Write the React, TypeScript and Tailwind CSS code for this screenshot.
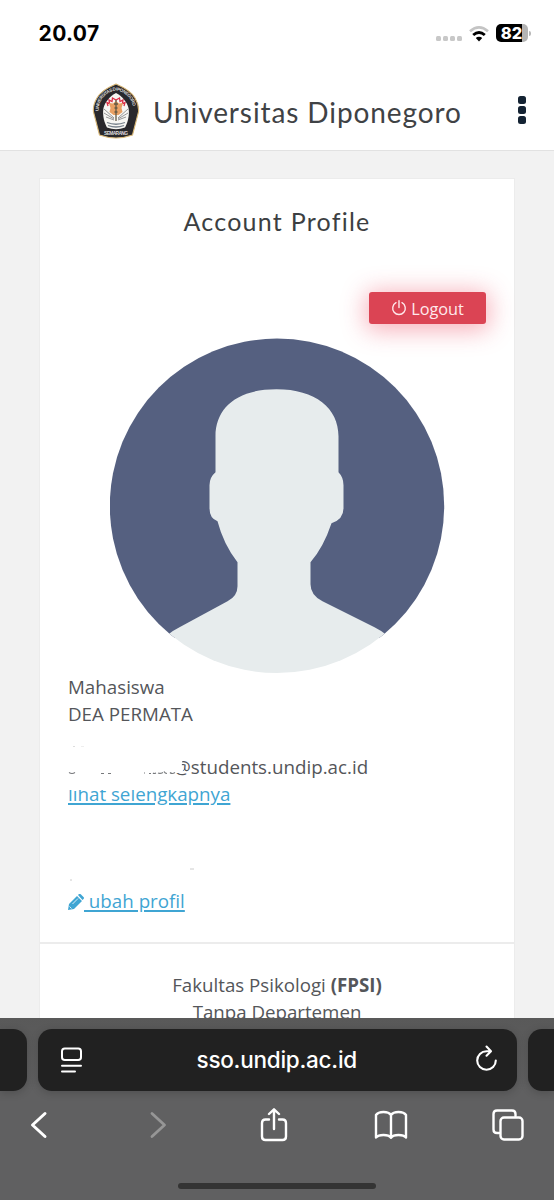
import React from "react";

function StatusBar() {
  return (
    <div className="flex h-[68px] items-start justify-between pl-[38.500px] pr-[23px] font-['Inter',sans-serif]">
      <span className="mt-[20px] text-[21px] leading-7 font-bold tracking-[0.4px] text-black">20.07</span>
      <div className="mt-[24px] flex items-center">
        <div className="mt-[10px] mr-[7px] flex gap-[2px]">
          {[0, 1, 2, 3].map((i) => (
            <span key={i} className="size-[5px] rounded-[1.5px] bg-[#c8c8c8]" />
          ))}
        </div>
        <svg width="20" height="17" viewBox="0 0 20 17" className="mr-[7px]" fill="none">
          <path d="M1 6.200Q10-1.500 19 6.200" stroke="#c4c4c4" strokeWidth="2.700" />
          <path d="M4.200 10Q10 5 15.800 10" stroke="#000" strokeWidth="2.900" />
          <path d="M10 16.400l-3.200-3.400a4.600 4.600 0 0 1 6.400 0z" fill="#000" />
        </svg>
        <div className="flex h-[18px] w-8 items-center justify-center rounded-[5px] bg-[linear-gradient(90deg,#000_82%,#b4b4b4_82%)] pr-px text-[16.5px] leading-none font-extrabold text-white">82</div>
        <span className="ml-px h-[5px] w-[2px] rounded-r-full bg-[#b8b8b8]" />
      </div>
    </div>
  );
}

function Crest() {
  return (
    <svg width="48" height="56" viewBox="0 0 48 56" className="shrink-0">
      <path d="M24 1C17 4 9 8 5 15 2 20 1 25 1.5 29L7.5 52Q24 58 40.500 52L46.500 29C47 24 46 20 43 15 39 8 31 4 24 1Z" fill="#29282c" stroke="#d9b878" strokeWidth="1.1" />
      <path d="M24 10C18 13 13 19 11.500 25 10 33 13 41 15 44.500Q24 48 33 44.500C35 41 38 33 36.500 25 35 19 30 13 24 10Z" fill="#f7f6f3" />
      <path id="crest-arc" d="M7 29C5.500 17 14.500 9 24 7.300 33.500 9 42.500 17 41 29" fill="none" />
      <text className="font-['Liberation_Sans',sans-serif] text-[4.600px] font-bold" fill="#d9d8d8">
        <textPath href="#crest-arc" textLength="54" startOffset="1">UNIVERSITAS DIPONEGORO</textPath>
      </text>
      <path d="M16 23l-1-3.500 2.500 1-.5-3.500 3 1.500.5-3.500 3.500 2 3.500-2 .5 3.500 3-1.500-.5 3.500 2.500-1-1 3.500" fill="none" stroke="#db3048" strokeWidth="1.300" />
      <path d="M24 18l3 2.500 4-.5-1.500 5 1 4-4 3h-5l-4-3 1-4-1.500-5 4 .5z" fill="#e8a063" />
      <path d="M22 35l-10-9M22 36l-10-6M22 37l-8-3M26 35l10-9M26 36l10-6M26 37l8-3" stroke="#6b6b6d" strokeWidth=".7" />
      <path d="M24 17v21M22 21h4M22.500 25h3M22.500 29h3" stroke="#625844" strokeWidth="1.300" />
      <path d="M15 39.500q9 3.500 18 0M16 42.500q8 3 16 0" stroke="#77808b" strokeWidth="1.300" fill="none" />
      <text x="24" y="51.600" textAnchor="middle" textLength="24" className="font-['Liberation_Sans',sans-serif] text-[4.800px] font-bold" fill="#dedddd">SEMARANG</text>
    </svg>
  );
}

function Header() {
  return (
    <header className="flex h-[83px] items-start border-b border-[#e2e2e2] pt-[15px] pr-[28px] pl-[92px]">
      <Crest />
      <h1 className="mt-[8px] ml-[13px] text-[28px] leading-[42px] tracking-[0.900px] whitespace-nowrap text-[#3f4245] font-['Lato',sans-serif]">Universitas Diponegoro</h1>
      <div className="mt-[13px] ml-auto flex flex-col gap-[2px]">
        {[0, 1, 2].map((i) => (
          <span key={i} className="size-[8px] rounded-[2.500px] bg-[#142333]" />
        ))}
      </div>
    </header>
  );
}

function Avatar() {
  return (
    <svg viewBox="0 0 335 335" className="mt-[14px] mb-px ml-[70px] block size-[335px]">
      <defs>
        <clipPath id="disc"><circle cx="167" cy="167.800" r="167.200" /></clipPath>
      </defs>
      <g clipPath="url(#disc)">
        <path d="M0 0H335V300H0Z" fill="#556080" />
        <path d="M167 51C127 51 106 70 106 98V134Q100 139 100 147V170Q100 180 108 183Q114 206 128 224V248Q128 258 118 263L70 289Q64 292 59 296V335H276V296Q271 292 265 289L213 263Q201 257 201 246V224Q214 209 222 185Q234 181 234 170V147Q234 139 229 134V98C229 70 206 51 167 51Z" transform="translate(-.5 .2)" fill="#e7eced" />
      </g>
    </svg>
  );
}

function Profile() {
  return (
    <div className="pl-[28px] text-[18.750px] leading-[26.700px] text-[#54565a]">
      <p>Mahasiswa</p>
      <p>DEA PERMATA</p>
      <div className="flex h-[26.700px] items-start pt-[19px] pl-[5px]">
        <span className="h-px w-[2px] bg-[#ddd]" />
        <span className="ml-[6px] h-px w-[3px] bg-[#eee]" />
      </div>
      <div className="relative">
        <p className="pl-[106px]">@students.undip.ac.id</p>
        <svg width="122" height="27" viewBox="0 0 122 27" className="absolute top-0 left-0">
          <path d="M101 0H119Q113 6 114 12L116 15Q115 18 112 19H101Z" fill="#fff" />
          <path d="M1 18.500q3 2 6 0M33 19.500h3M40 19.500h3M76 19h1M81 19.500h2M85 19q1 1 3 0M90 19q2 1 5-.5M96 17.500q1 2 3 2M102 18.500q2 2 5 0" stroke="#77797c" strokeWidth="1.200" fill="none" />
        </svg>
      </div>
      <div className="relative">
        <a className="text-[#3fa5d3] underline decoration-[1.500px] underline-offset-[2px]">lihat selengkapnya</a>
        <span className="absolute top-0 left-0 h-[9px] w-[120px] bg-white" />
      </div>
      <div className="flex h-[80.300px] items-start pt-[60px]">
        <svg width="140" height="16" viewBox="0 0 140 16"><path d="M122 1h4M2 12h2" stroke="#ccc" /></svg>
      </div>
      <a className="flex items-center text-[#3fa5d3]">
        <svg width="16" height="16" viewBox="0 0 16 16" className="mt-[2px]">
          <path d="M0 16l1-6 8-8 5 5-8 8zM10 1l1-1q1-.5 2 .5L15.500 3q1 1 0 2L14.500 6z" fill="currentColor" />
          <path d="M1.500 12.500l2 2M4.500 10l5.500-5.500" stroke="#fff" strokeWidth=".8" />
        </svg>
        <span className="whitespace-pre underline decoration-[1.500px] underline-offset-[2px]"> ubah profil</span>
      </a>
    </div>
  );
}

function AccountCard() {
  return (
    <main className="mx-[39px] mt-[27px] h-[860px] border border-[#ececec] bg-white">
      <h2 className="pt-[26px] text-center text-[25px] leading-[32px] tracking-[1.250px] text-[#3c3f42] font-['Lato',sans-serif]">Account Profile</h2>
      <div className="mt-[55px] flex justify-end pr-[28px]">
        <button className="flex h-[32px] w-[117px] items-center justify-center rounded-[3px] bg-[#db4454] pt-[2px] text-[16.300px] text-[#ffe9ec] shadow-[0_3px_24px_3px_rgba(235,55,80,0.400)]">
          <svg width="16" height="16" viewBox="0 0 16 16" fill="none" stroke="currentColor" strokeWidth="1.400" strokeLinecap="round" className="mr-[4px] mb-[3px]">
            <path d="M8 .8v6.700M5 2.700a6.300 6.300 0 1 0 6 0" />
          </svg>
          Logout
        </button>
      </div>
      <Avatar />
      <Profile />
      <div className="mt-[27.500px] border-t-2 border-[#ececec] pt-[28px] text-center text-[18.700px] leading-[26.700px] text-[#54565a]">
        <p>Fakultas Psikologi <b>(FPSI)</b></p>
        <p>Tanpa Departemen</p>
      </div>
    </main>
  );
}

const iconProps = { fill: "none", stroke: "currentColor", strokeWidth: 2.4, strokeLinecap: "round", strokeLinejoin: "round" } as const;

function BrowserBar() {
  return (
    <footer className="h-[182px] bg-[linear-gradient(#595959,#606061_40%,#606061)] pt-[10.500px] text-white">
      <div className="flex h-[62.500px] gap-[11px]">
        <div className="w-[26.500px] rounded-r-[14px] bg-[#212121] shadow-[0_2px_8px_rgba(0,0,0,0.18)]" />
        <div className="flex flex-1 items-center justify-between rounded-[14px] bg-[#212121] pr-[19px] pl-[23.500px] shadow-[0_2px_8px_rgba(0,0,0,0.18)]">
          <svg width="21" height="26" viewBox="0 0 21 26" {...iconProps} strokeWidth={2}>
            <rect x="1" y="1.500" width="19" height="11.500" rx="2.800" />
            <path d="M1 18.800h19M1 24.500h13" />
          </svg>
          <span className="mt-px mr-[5px] text-[22.500px] font-medium tracking-[-0.250px] font-['Inter',sans-serif]">sso.undip.ac.id</span>
          <svg width="21" height="26" viewBox="0 0 21 26" {...iconProps} strokeWidth={2.100} className="mb-[3px]">
            <path d="M14 6.200H10.500A9.300 9.300 0 1 0 19.800 15.500M10.500 1.500l4.500 4.700-4.500 4.500" />
          </svg>
        </div>
        <div className="w-[26.500px] rounded-l-[14px] bg-[#212121] shadow-[0_2px_8px_rgba(0,0,0,0.18)]" />
      </div>
      <nav className="mt-[15px] flex h-[38px] items-center pl-[30px]">
        <svg width="18" height="28" viewBox="0 0 18 28" {...iconProps} strokeWidth={3}><path d="M15 2.500L2.500 14l12.500 11.500" /></svg>
        <svg width="18" height="28" viewBox="0 0 18 28" {...iconProps} strokeWidth={2.800} className="ml-[101px] text-[#969696]"><path d="M3 2.500L15.500 14 3 25.500" /></svg>
        <svg width="28" height="34" viewBox="0 0 28 34" {...iconProps} className="ml-[93px]"><path d="M9 11.500H5.500Q2 11.500 2 15V28.500Q2 32 5.500 32H22.500Q26 32 26 28.500V15Q26 11.500 22.500 11.500H19M14 21V2M9 6L14 1.300l5 4.700" /></svg>
        <svg width="34" height="30" viewBox="0 0 34 30" {...iconProps} className="ml-[86px]"><path d="M17 5Q15 2 9.500 2Q4 2 2 5V27.500Q4 25 9.500 25Q15 25 17 27.800Q19 25 24.500 25Q30 25 32 27.500V5Q30 2 24.500 2Q19 2 17 5V27.800" /></svg>
        <svg width="32" height="32" viewBox="0 0 32 32" {...iconProps} className="ml-[84px]"><path d="M7 24H5Q1.500 24 1.500 20.500V5Q1.500 1.500 5 1.500H20Q23.500 1.500 23.500 5V7" /><rect x="8.500" y="8.500" width="22" height="22" rx="3.500" /></svg>
      </nav>
      <div className="mx-auto mt-[39px] h-[6px] w-[198px] rounded-full bg-[#343434]" />
    </footer>
  );
}

export default function App() {
  return (
    <div className="flex h-[1200px] w-[554px] flex-col overflow-hidden bg-[#f2f2f2] font-['Open_Sans',sans-serif]">
      <div className="h-[1018px] overflow-hidden">
        <div className="bg-white">
          <StatusBar />
          <Header />
        </div>
        <AccountCard />
      </div>
      <BrowserBar />
    </div>
  );
}
